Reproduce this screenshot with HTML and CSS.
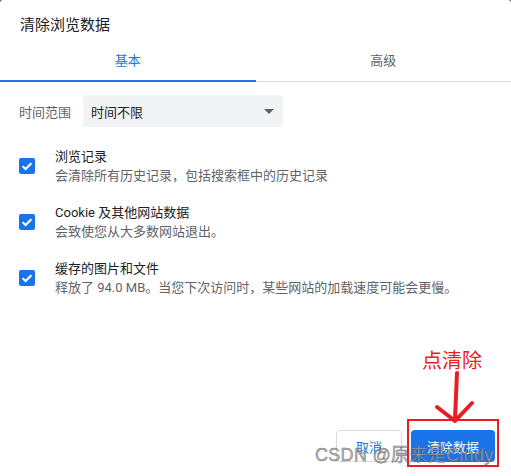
FILE: index.html
```html
<!DOCTYPE html>
<html lang="zh-CN">
<head>
<meta charset="utf-8">
<title>清除浏览数据</title>
<link rel="stylesheet" href="styles.css">
</head>
<body>
<div class="dialog">
  <div class="title">清除浏览数据</div>
  <div class="tabs">
    <div class="tab active">基本</div>
    <div class="tab">高级</div>
  </div>
  <div class="content">
    <div class="range">
      <span class="range-label">时间范围</span>
      <div class="select">
        <span>时间不限</span>
        <span class="caret"></span>
      </div>
    </div>
    <div class="item">
      <span class="check"><svg viewBox="0 0 16 16" width="16" height="16"><path d="M3.6 8.2 L6.6 11 L12.4 5.2" fill="none" stroke="#fff" stroke-width="2.2"/></svg></span>
      <div class="item-text">
        <div class="item-title">浏览记录</div>
        <div class="item-desc">会清除所有历史记录，包括搜索框中的历史记录</div>
      </div>
    </div>
    <div class="item">
      <span class="check"><svg viewBox="0 0 16 16" width="16" height="16"><path d="M3.6 8.2 L6.6 11 L12.4 5.2" fill="none" stroke="#fff" stroke-width="2.2"/></svg></span>
      <div class="item-text">
        <div class="item-title">Cookie 及其他网站数据</div>
        <div class="item-desc">会致使您从大多数网站退出。</div>
      </div>
    </div>
    <div class="item">
      <span class="check"><svg viewBox="0 0 16 16" width="16" height="16"><path d="M3.6 8.2 L6.6 11 L12.4 5.2" fill="none" stroke="#fff" stroke-width="2.2"/></svg></span>
      <div class="item-text">
        <div class="item-title">缓存的图片和文件</div>
        <div class="item-desc">释放了 94.0 MB。当您下次访问时，某些网站的加载速度可能会更慢。</div>
      </div>
    </div>
  </div>
  <div class="footer">
    <button class="btn btn-cancel">取消</button>
    <button class="btn btn-primary">清除数据</button>
  </div>

  <div class="note">点清除</div>
  <svg class="arrow" width="511" height="476" viewBox="0 0 511 476">
    <path d="M457 373 L455 419 M437 407 L455 421 L472 403" fill="none" stroke="#ec1c24" stroke-width="4" stroke-linecap="round" stroke-linejoin="round"/>
  </svg>
  <div class="highlight"></div>
  <div class="watermark">CSDN @原来是Cindy</div>
</div>
</body>
</html>
```

FILE: styles.css
```css
html, body {
  margin: 0;
  padding: 0;
  background: #4a4a4a;
}
body {
  width: 511px;
  height: 476px;
  overflow: hidden;
  font-family: Roboto, "Noto Sans CJK SC", sans-serif;
}
.dialog {
  position: relative;
  width: 511px;
  height: 476px;
  background: #fff;
  border-radius: 3px 3px 0 0;
  display: flex;
  flex-direction: column;
  box-sizing: border-box;
}
.title {
  padding: 15px 20px 0;
  font-size: 15px;
  line-height: 20px;
  color: #202124;
}
.tabs {
  margin-top: 10px;
  display: flex;
  border-bottom: 1px solid #dadce0;
}
.tab {
  flex: 1;
  text-align: center;
  font-size: 13px;
  line-height: 32px;
  padding-bottom: 3px;
  color: #5f6368;
  border-bottom: 2px solid transparent;
  margin-bottom: -1px;
}
.tab.active {
  color: #1a73e8;
  border-bottom-color: #1a73e8;
}
.content {
  padding: 0 19px;
}
.range {
  margin-top: 13px;
  display: flex;
  align-items: center;
  gap: 12px;
}
.range-label {
  font-size: 13px;
  color: #5f6368;
}
.select {
  width: 200px;
  height: 32px;
  box-sizing: border-box;
  background: #f1f3f4;
  border-radius: 4px;
  padding: 0 8px;
  display: flex;
  align-items: center;
  justify-content: space-between;
  font-size: 13px;
  color: #202124;
}
.caret {
  width: 0;
  height: 0;
  border-left: 5px solid transparent;
  border-right: 5px solid transparent;
  border-top: 5px solid #5f6368;
  margin-right: 1px;
}
.range + .item {
  margin-top: 11px;
}
.item {
  height: 56px;
  display: flex;
  align-items: center;
}
.check {
  width: 16px;
  height: 16px;
  border-radius: 2px;
  background: #1a73e8;
  display: block;
  flex: none;
}
.check svg {
  display: block;
}
.item-text {
  margin-left: 20px;
  font-size: 13px;
  line-height: 19px;
}
.item-title {
  color: #202124;
}
.item-desc {
  color: #5f6368;
}
.footer {
  margin-top: auto;
  padding: 0 16px 14px;
  display: flex;
  justify-content: flex-end;
  gap: 9px;
}
.btn {
  height: 32px;
  box-sizing: border-box;
  border-radius: 4px;
  font-family: Roboto, "Noto Sans CJK SC", sans-serif;
  font-size: 13px;
  padding: 0;
  cursor: pointer;
}
.btn-cancel {
  width: 66px;
  background: #fff;
  color: #1a73e8;
  border: 1px solid #dadce0;
}
.btn-primary {
  width: 84px;
  background: #1a73e8;
  color: #fff;
  border: none;
}
.note {
  position: absolute;
  left: 422px;
  top: 348px;
  font-size: 20px;
  line-height: 24px;
  color: #ec1c24;
  font-family: "Noto Sans CJK SC", sans-serif;
}
.arrow {
  position: absolute;
  left: 0;
  top: 0;
  pointer-events: none;
}
.highlight {
  position: absolute;
  left: 407px;
  top: 419px;
  width: 92px;
  height: 48px;
  box-sizing: border-box;
  border: 2px solid #ec1c24;
}
.watermark {
  position: absolute;
  left: 315px;
  top: 444px;
  font-family: "Liberation Sans", "Noto Sans CJK SC", sans-serif;
  font-size: 18px;
  line-height: 22px;
  letter-spacing: 0.3px;
  color: rgba(170, 170, 170, 0.8);
  -webkit-text-stroke: 0.5px rgba(80, 80, 80, 0.75);
  white-space: nowrap;
}
```
